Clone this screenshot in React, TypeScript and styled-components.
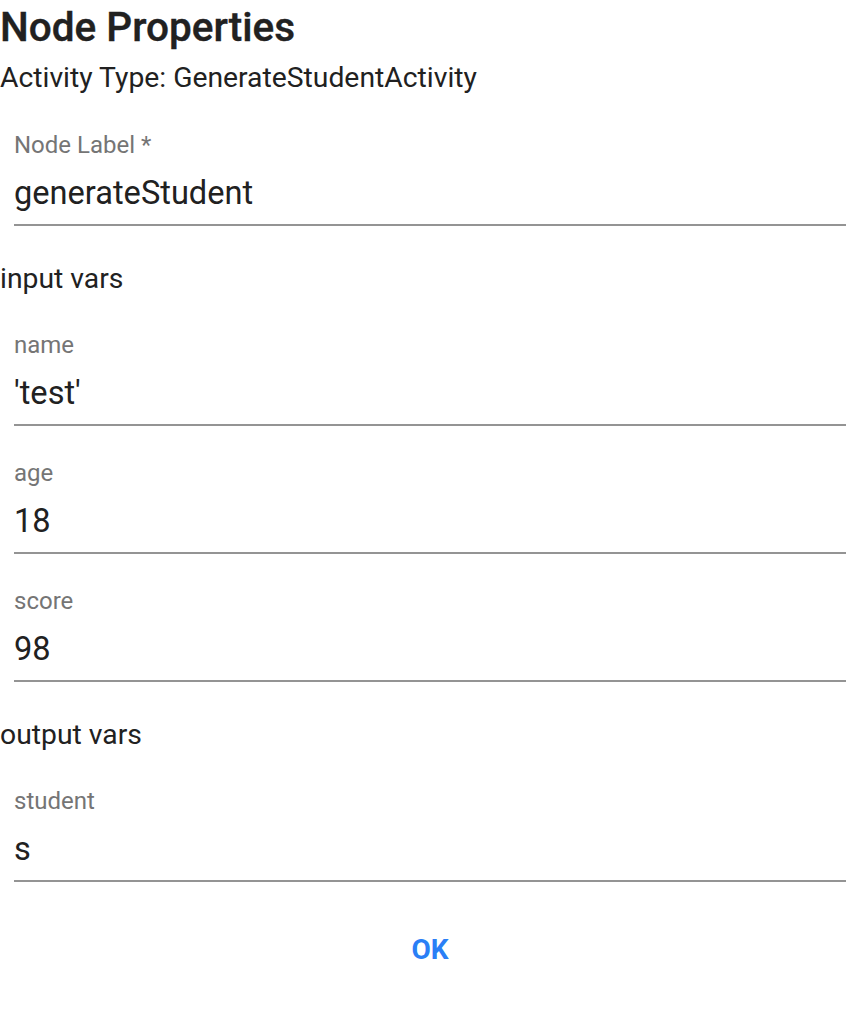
import React from "react";
import styled, { createGlobalStyle } from "styled-components";

const Global = createGlobalStyle`
  html, body { margin: 0; padding: 0; background: #ffffff; }
  body { font-family: Roboto, "Noto Sans", "Liberation Sans", sans-serif; color: rgba(0,0,0,0.87); }
`;

const Page = styled.div`
  display: flex;
  flex-direction: column;
  width: 860px;
`;

const Title = styled.h1`
  margin: 0;
  font-size: 40.5px;
  line-height: 54px;
  font-weight: 500;
  color: #212121;
  -webkit-text-stroke: 0.4px #212121;
`;

const Subtitle = styled.div`
  margin-top: 6px;
  font-size: 28.3px;
  line-height: 36px;
  color: #212121;
`;

const Section = styled.div`
  margin-top: 35px;
  font-size: 28.3px;
  line-height: 36px;
  color: #212121;
`;

const Fields = styled.div<{ $top: number }>`
  display: flex;
  flex-direction: column;
  gap: 32px;
  margin: ${(p) => p.$top}px 14px 0 14px;
`;

const Field = styled.label`
  display: flex;
  flex-direction: column;
  border-bottom: 2px solid #949494;
  padding-bottom: 11px;
`;

const Label = styled.span`
  font-size: 24px;
  line-height: 30px;
  color: #757575;
`;

const Value = styled.input`
  margin-top: 13px;
  border: none;
  outline: none;
  padding: 0;
  background: transparent;
  font-family: inherit;
  font-size: 32.6px;
  line-height: 40px;
  height: 40px;
  color: #212121;
`;

const Actions = styled.div`
  display: flex;
  justify-content: center;
  margin-top: 50px;
`;

const OkButton = styled.button`
  border: none;
  background: transparent;
  padding: 0 16px;
  font-family: inherit;
  font-size: 28px;
  line-height: 36px;
  font-weight: 700;
  color: #2a7ff6;
  cursor: pointer;
`;

const FieldRow = ({ label, value }: { label: string; value: string }) => (
  <Field>
    <Label>{label}</Label>
    <Value defaultValue={value} />
  </Field>
);

export default function App() {
  return (
    <Page>
      <Global />
      <Title>Node Properties</Title>
      <Subtitle>Activity Type: GenerateStudentActivity</Subtitle>
      <Fields $top={34}>
        <FieldRow label="Node Label *" value="generateStudent" />
      </Fields>
      <Section>input vars</Section>
      <Fields $top={33}>
        <FieldRow label="name" value="'test'" />
        <FieldRow label="age" value="18" />
        <FieldRow label="score" value="98" />
      </Fields>
      <Section>output vars</Section>
      <Fields $top={33}>
        <FieldRow label="student" value="s" />
      </Fields>
      <Actions>
        <OkButton>OK</OkButton>
      </Actions>
    </Page>
  );
}
